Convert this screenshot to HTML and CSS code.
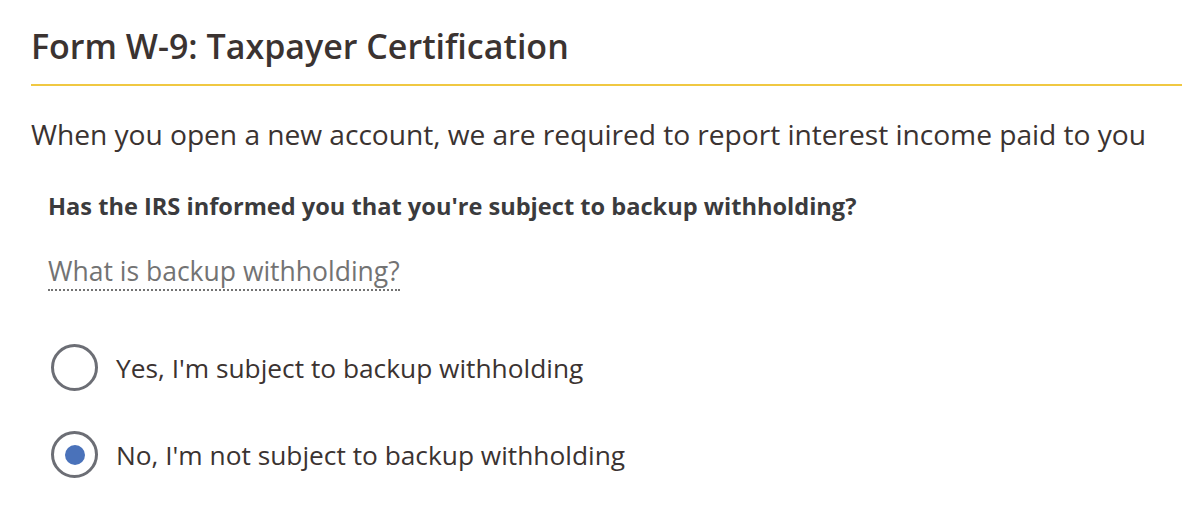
FILE: index.html
```html
<!DOCTYPE html>
<html>
<head>
<meta charset="utf-8">
<link rel="stylesheet" href="styles.css">
</head>
<body>
<div class="page">
  <h1 class="title">Form W-9: Taxpayer Certification</h1>
  <p class="intro">When you open a new account, we are required to report interest income paid to you</p>
  <div class="question">Has the IRS informed you that you're subject to backup withholding?</div>
  <div class="help"><span class="help-link">What is backup withholding?</span></div>
  <div class="options">
    <label class="option">
      <span class="radio"></span>
      <span class="option-text">Yes, I'm subject to backup withholding</span>
    </label>
    <label class="option">
      <span class="radio checked"></span>
      <span class="option-text">No, I'm not subject to backup withholding</span>
    </label>
  </div>
</div>
</body>
</html>
```
FILE: styles.css
```css
html, body {
  margin: 0;
  padding: 0;
  background: #fff;
}
.page {
  padding-left: 31px;
  font-family: "Open Sans", "Liberation Sans", sans-serif;
  color: #3b3331;
}
.title {
  margin: 0;
  padding-top: 26px;
  padding-bottom: 18px;
  font-size: 34px;
  font-weight: 600;
  line-height: 40px;
  border-bottom: 2px solid #f0c842;
}
.intro {
  margin: 0;
  padding-top: 30px;
  font-size: 28.2px;
  line-height: 36px;
  letter-spacing: -0.05px;
}
.question {
  padding-left: 17px;
  padding-top: 39px;
  font-size: 23.6px;
  font-weight: 700;
  line-height: 30px;
  color: #3b3b3d;
}
.help {
  padding-left: 17px;
  padding-top: 34px;
  line-height: 32px;
}
.help-link {
  font-size: 26.5px;
  line-height: 32px;
  color: #737373;
  border-bottom: 2px dotted #737373;
}
.options {
  padding-left: 20px;
  padding-top: 53px;
  display: flex;
  flex-direction: column;
  gap: 40px;
}
.option {
  display: flex;
  align-items: center;
  gap: 18px;
}
.radio {
  box-sizing: border-box;
  width: 47px;
  height: 47px;
  border: 3.5px solid #6c6e75;
  border-radius: 50%;
  display: flex;
  align-items: center;
  justify-content: center;
}
.radio.checked::after {
  content: "";
  width: 20px;
  height: 20px;
  border-radius: 50%;
  background: #4a72ba;
}
.option-text {
  font-size: 26.3px;
  line-height: 36px;
  color: #3b3331;
}
```
